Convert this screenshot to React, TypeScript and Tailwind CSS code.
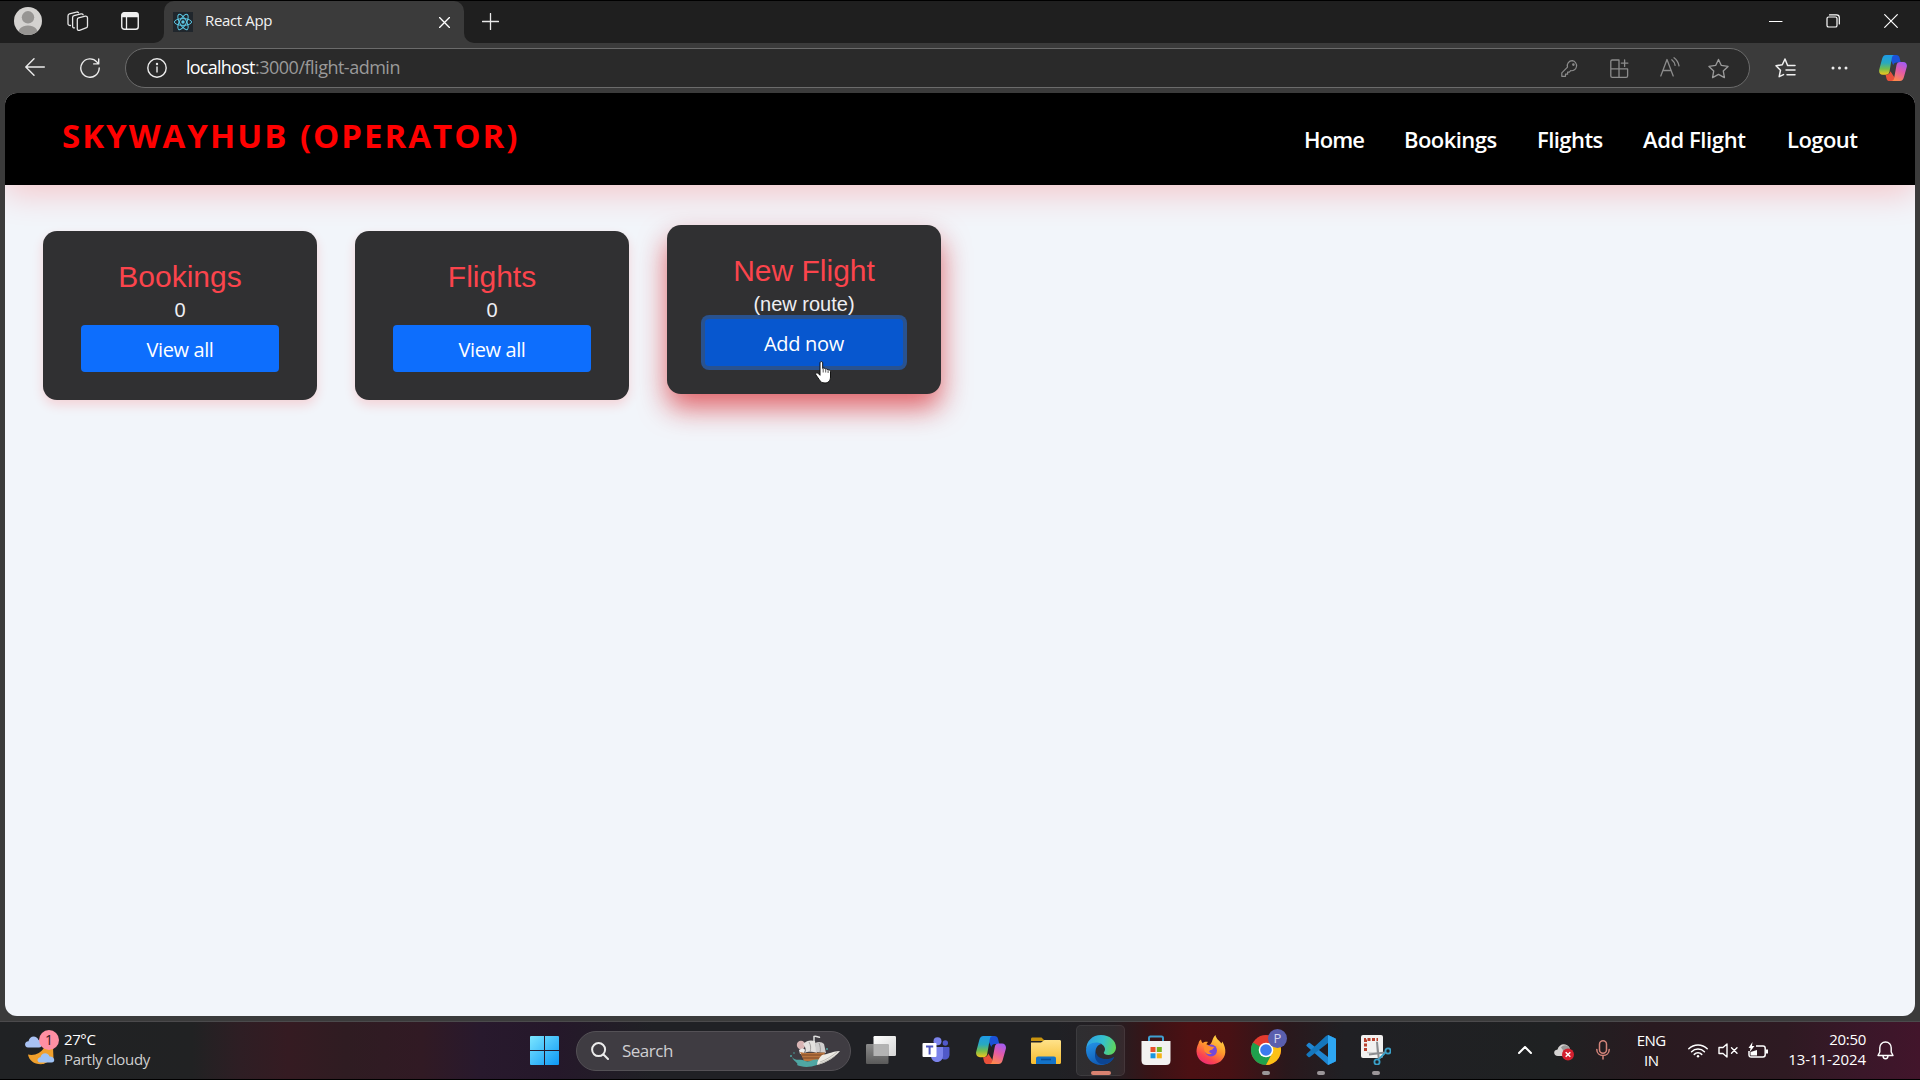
import React from "react";

type Box = { children?: React.ReactNode; className?: string };

const Icon = ({ vb, className, children }: Box & { vb: string }) => (
  <svg viewBox={vb} className={className} fill="none" strokeLinecap="round" strokeLinejoin="round">
    {children}
  </svg>
);

function CopilotLogo({ className, id }: { className: string; id: string }) {
  return (
    <svg viewBox="0 0 30 28" className={className}>
      <defs>
        <linearGradient id={id + "a"} x1="0" y1="0" x2="0" y2="1">
          <stop offset="0" stopColor="#1e9be8" />
          <stop offset=".4" stopColor="#28a9c0" />
          <stop offset=".7" stopColor="#74bd4d" />
          <stop offset="1" stopColor="#f2c51d" />
        </linearGradient>
        <linearGradient id={id + "b"} x1=".7" y1="0" x2=".3" y2="1">
          <stop offset="0" stopColor="#a45cf0" />
          <stop offset=".45" stopColor="#e25aa8" />
          <stop offset="1" stopColor="#ff8a4a" />
        </linearGradient>
      </defs>
      <path d="M15 0h3.500c2 0 3 .9 3.500 2.800L23.300 8H19c-2 0-3.200 1-3.700 3L12 4c-.5-2 1-4 3-4z" fill="#1b52d8" />
      <path d="M7.500 0H17c-2 0-2.800 1.200-3.200 3l-2.600 15c-.5 2.200-1.700 3.200-3.900 3.200H4c-3 0-4.500-2.500-3.800-5.500L3.300 4C4 1.500 5.200 0 7.500 0z" fill={`url(#${id}a)`} />
      <path d="M15 28h-3.500c-2 0-3-.9-3.500-2.800l-1-4h1c2.400 0 3.600-1.200 4.200-3.700L16.500 24c.5 2 .5 4-1.500 4z" fill="#e8503a" />
      <path d="M22.500 28H13c2 0 2.800-1.200 3.200-3l2.600-14.200c.5-2.200 1.700-3.300 3.900-3.300H26c3 0 4.500 2.500 3.800 5.500L26.700 24c-.7 2.500-1.900 4-4.200 4z" fill={`url(#${id}b)`} />
    </svg>
  );
}

function ReactFavicon() {
  return (
    <svg viewBox="0 0 20 20" className="h-5 w-5" fill="none" stroke="#5cc8e4" strokeWidth="1">
      <rect width="20" height="20" fill="#20262c" stroke="none" />
      <ellipse cx="10" cy="10" rx="8.600" ry="3.400" />
      <ellipse cx="10" cy="10" rx="8.600" ry="3.400" transform="rotate(60 10 10)" />
      <ellipse cx="10" cy="10" rx="8.600" ry="3.400" transform="rotate(120 10 10)" />
      <circle cx="10" cy="10" r="1.700" fill="#5cc8e4" stroke="none" />
    </svg>
  );
}

function TitleBar() {
  return (
    <div className="flex h-[43px] shrink-0 border-t border-black bg-[#1f1f1f]">
      <div className="flex w-[164px] shrink-0 items-start bg-[#3b3b3b]">
        <div className="flex h-[42px] w-full items-center rounded-br-[10px] bg-[#1f1f1f] pb-[2px] pl-[14px]">
          <svg viewBox="0 0 28 28" className="h-7 w-7">
            <defs><clipPath id="avatar"><circle cx="14" cy="14" r="14" /></clipPath></defs>
            <g clipPath="url(#avatar)">
              <rect width="28" height="28" fill="#d4d2d0" />
              <circle cx="14" cy="10.300" r="6.200" fill="#979593" />
              <path d="M4 28c0-6 3.500-9.500 10-9.500S24 22 24 28z" fill="#979593" />
            </g>
          </svg>
          <Icon vb="0 0 22 21" className="ml-[25px] h-[21px] w-[22px] stroke-[#e6e6e6] stroke-[1.3]">
            <path d="M11.500 6.800l6.800-1.600c1.200-.3 2.200.4 2.200 1.700v8c0 1-.5 1.700-1.500 2l-6.500 2.400c-1.200.4-2.200-.2-2.200-1.500V8.800c0-1.100.3-1.800 1.200-2z" />
            <path d="M7.500 16.800c-1.300.2-1.900-.5-1.900-1.600V6.600c0-1.100.4-1.800 1.400-2l7-1.700c1-.2 1.800.1 2.100.9" />
            <path d="M3.500 14.500C1.900 14.500 1 13.900 1 12.700V5c0-1.100.4-1.800 1.400-2.100l7-1.800c1-.3 1.700 0 2.100.7" />
          </Icon>
          <svg viewBox="0 0 18 18" className="ml-[32px] h-[18px] w-[18px]">
            <rect x=".75" y=".75" width="16.500" height="16.500" rx="2.500" fill="none" stroke="#f0f0f0" strokeWidth="1.400" />
            <path d="M.7 5.200V3A2.500 2.500 0 013.200.5h11.600A2.500 2.500 0 0117.300 3v2.200z" fill="#f0f0f0" />
            <path d="M5.500 5v12" stroke="#f0f0f0" strokeWidth="1.300" />
          </svg>
        </div>
      </div>
      <div className="flex w-[300px] shrink-0 items-center rounded-t-[10px] bg-[#3b3b3b] pl-[9px]">
        <ReactFavicon />
        <span className="ml-[12px] -mt-[4px] text-[15px] tracking-[-0.35px] text-[#f2f2f2]">React App</span>
        <Icon vb="0 0 10 10" className="ml-auto mr-[14px] h-[11px] w-[11px] stroke-white stroke-[1.2]">
          <path d="M.5.5l9 9M9.500.5l-9 9" />
        </Icon>
      </div>
      <div className="flex flex-1 bg-[#3b3b3b]">
        <div className="flex h-[42px] flex-1 items-center rounded-bl-[10px] bg-[#1f1f1f] pb-[2px] pl-[18px]">
          <Icon vb="0 0 17 17" className="h-[17px] w-[17px] stroke-[#e8e8e8] stroke-[1.3]">
            <path d="M8.500.5v16M.5 8.500h16" />
          </Icon>
          <Icon vb="0 0 14 14" className="ml-auto h-[14px] w-[14px] stroke-white stroke-[1.2]"><path d="M.5 7.500h12.500" /></Icon>
          <Icon vb="0 0 14 14" className="ml-[43px] h-[14px] w-[14px] stroke-white stroke-[1.2]">
            <rect x="1" y="3" width="10" height="10" rx="1.600" />
            <path d="M3.500.9h7c1.700 0 2.800 1 2.800 2.700v6.400" />
          </Icon>
          <Icon vb="0 0 14 14" className="ml-[44px] mr-[22px] h-[14px] w-[14px] stroke-white stroke-[1.2]">
            <path d="M.7.7l12.600 12.600M13.300.7L.7 13.300" />
          </Icon>
        </div>
      </div>
    </div>
  );
}

function Toolbar() {
  return (
    <div className="flex h-[50px] shrink-0 items-center bg-[#3b3b3b] pl-[25px]">
      <Icon vb="0 0 20 18" className="-mt-[2px] h-[18px] w-5 stroke-[#ececec] stroke-[1.4]">
        <path d="M19.300 9H1M9 .8L.8 9 9 17.200" />
      </Icon>
      <Icon vb="0 0 20 20" className="ml-[35px] h-5 w-5 stroke-[#ececec] stroke-[1.4]">
        <path d="M19.200 10A9.200 9.200 0 1117 4.100l1.500 1.700M18.700.9v5h-5" />
      </Icon>
      <div className="ml-[25px] flex h-10 w-[1625px] items-center rounded-full border border-[#6b6b6b] bg-[#2a2a2a] pl-[21px] pr-[20px]">
        <Icon vb="0 0 20 20" className="h-5 w-5 stroke-[#ececec] stroke-[1.4]">
          <circle cx="10" cy="10" r="9.200" />
          <path d="M10 9v5" />
          <circle cx="10" cy="6" r=".5" />
        </Icon>
        <span className="ml-[19px] -mt-[2px] w-[69px] text-[18px] tracking-[-0.75px] text-white">localhost</span>
        <span className="-mt-[2px] text-[18px] tracking-[-0.5px] text-[#9a9a9a]">:3000/flight-admin</span>
        <Icon vb="0 0 17 17" className="ml-auto h-[17px] w-[17px] stroke-[#8c8c8c] stroke-[1.2]">
          <path d="M11.300.7a5 5 0 00-4.800 6.400L.8 12.800v3.500h3.700v-2.100h2.100v-2.100h1.700l1.400-1.400A5 5 0 1011.300.7z" />
          <circle cx="12.400" cy="4.600" r=".7" />
        </Icon>
        <Icon vb="0 0 19 19" className="ml-[32px] h-[19px] w-[19px] stroke-[#8c8c8c] stroke-[1.3]">
          <path d="M9 18.300V1H2.200C1.400 1 .8 1.600.8 2.400v14.500c0 .8.600 1.400 1.400 1.400h14c.8 0 1.400-.6 1.400-1.400v-7H.8M14.600.8v6.600M11.300 4.100h6.600" />
        </Icon>
        <Icon vb="0 0 20 20" className="-mt-[2px] ml-[31px] h-[20px] w-[20px] stroke-[#8c8c8c] stroke-[1.3]">
          <path d="M.8 19L7 2.500 13.200 19M3 13.500h8M11.800 2.800c1.800 1.400 2.900 3.200 3.300 5.500M14 .8c2.600 2 4.400 4.600 5 8" />
        </Icon>
        <Icon vb="0 0 22 21" className="ml-[28px] h-[21px] w-[21px] stroke-[#9a9a9a] stroke-[1.4]">
          <path d="M11 1l3 6.300 7 1-5 4.800 1.200 6.900L11 16.700 4.800 20 6 13.100 1 8.300l7-1z" />
        </Icon>
      </div>
      <Icon vb="0 0 21 20" className="ml-[25px] h-5 w-[21px] stroke-[#f0f0f0] stroke-[1.5]">
        <path d="M12.500 7.300L10 1 7.300 6.800 1 7.700l4.500 4.500L4.200 18.700l4.300-2.100M12.500 7.500h7.500M11 12h9M12 16.700h8" />
      </Icon>
      <svg viewBox="0 0 17 4" className="ml-[35px] h-1 w-[17px] fill-[#ececec]">
        <circle cx="2" cy="2" r="1.500" /><circle cx="8.500" cy="2" r="1.500" /><circle cx="15" cy="2" r="1.500" />
      </svg>
      <CopilotLogo id="cpt" className="ml-[31px] h-[26px] w-[28px]" />
    </div>
  );
}

function Navbar() {
  return (
    <header className="flex h-[92px] items-center bg-black pl-[57px] shadow-[0_8px_34px_rgba(255,0,0,0.2)]">
      <h1 className="-mt-[6px] whitespace-nowrap text-[33px] font-bold tracking-[2px] text-[#ff0000] [word-spacing:1px]">SKYWAYHUB (OPERATOR)</h1>
      <nav className="ml-auto mr-[57px] flex whitespace-nowrap pt-[1px] text-[22px] font-semibold tracking-[-0.55px] text-white">
        <a className="w-[100px] tracking-[-0.9px]">Home</a>
        <a className="w-[133px]">Bookings</a>
        <a className="w-[106px]">Flights</a>
        <a className="w-[144px] tracking-[-0.4px]">Add Flight</a>
        <a className="w-[71px]">Logout</a>
      </nav>
    </header>
  );
}

function Card({ title, sub, action, hover }: { title: string; sub: string; action: string; hover?: boolean }) {
  return (
    <section
      className={
        "flex h-[169px] w-[274px] flex-col items-center rounded-[14px] bg-[#303032] pt-[27px] font-['Liberation_Sans',sans-serif] " +
        (hover ? "-mt-[6px] shadow-[0_14px_28px_rgba(215,22,28,0.65)]" : "shadow-[0_5px_12px_rgba(255,0,0,0.14)]")
      }
    >
      <h2 className="text-[30px] leading-[38px] text-[#fb444c]">{title}</h2>
      <p className="text-[20px] leading-[29px] text-[#eeeef2]">{sub}</p>
      <button
        className={
          "h-[47px] w-[198px] shrink-0 rounded-[4px] pt-[2px] font-['Open_Sans',sans-serif] text-[20px] leading-[45px] text-white " +
          (hover ? "bg-[#0757cf] tracking-[-0.3px] shadow-[0_0_0_4px_#29528f]" : "bg-[#0d6efd] tracking-[-0.4px]")
        }
      >
        {action}
      </button>
    </section>
  );
}

function Pointer() {
  return (
    <svg viewBox="0 0 18 23" className="absolute left-[815px] top-[361px] h-[23px] w-[18px]">
      <path d="M5 1.800c0-1.600 2.700-1.600 2.700 0v5.700c.9-.7 2.400-.4 2.600.6.900-.5 2.300-.2 2.500.9 1.200-.5 2.700.1 2.700 1.500v5.500c0 3.500-2.200 6-5.500 6-3.200 0-4.700-1.300-5.900-3.600L.8 13.800c-.8-1.700 1.200-2.700 2.400-1.400L5 14.300z" fill="#fff" stroke="#111" strokeWidth="1" />
      <path d="M8.200 8v3.500M10.700 8.500v3M13.100 9.500v2.500" stroke="#333" strokeWidth=".8" />
    </svg>
  );
}

const StartLogo = () => (
  <svg viewBox="0 0 29 29" className="ml-[380px] h-[29px] w-[29px]">
    <defs><linearGradient id="win" x1="0" y1="0" x2="1" y2="1"><stop stopColor="#7be6ff" /><stop offset="1" stopColor="#0d98f5" /></linearGradient></defs>
    <path fill="url(#win)" d="M1 0h13v14H0V1a1 1 0 011-1zM15 0h13a1 1 0 011 1v13H15zM0 15h14v14H1a1 1 0 01-1-1zM15 15h14v13a1 1 0 01-1 1H15z" />
  </svg>
);

const Ship = () => (
  <svg viewBox="0 0 51 32" className="ml-auto mr-[10px] h-[32px] w-[51px]">
    <circle cx="12" cy="10" r="4.200" fill="#d8b4b4" />
    <path d="M25 6V1.500c3-1 4 1.500 6 .5" stroke="#ddd" strokeWidth="1.500" fill="none" />
    <path d="M14 9c4-4 8-4 12-3l2 12c-4-1-9-2-12 0 1-3 1-6-2-9z" fill="#e3e1df" />
    <path d="M26 8c4-2 7-1 9 1l2 9-10-1z" fill="#cfcece" />
    <path d="M20 7c2 3 2 7 1 10M30 8c1 3 2 6 1 9" stroke="#8f8d8c" strokeWidth=".8" fill="none" />
    <path d="M10 15c3-2 5-2 6 0l-1 4h-4z" fill="#eee" />
    <path d="M11 17l5 1 20-.5c-1 5-4 9-8 9.500l-13-1z" fill="#b9753f" />
    <path d="M13 20l21 0M14 23l17 0" stroke="#7b4826" strokeWidth="1" />
    <path d="M3 22c4 5 8 1 13 4 5 2 8-3 14-1l-2 5c-8 3-16 2-20 0 2-2-3-3-5-8z" fill="#4fa6a3" />
    <path d="M33 20c7-1 11-4 18-4-4 5-13 12-23 14 0-4 2-7 5-10z" fill="#eceae4" />
    <path d="M31 27c6-2 12-6 17-10M30 29c6-2 12-5 16-8" stroke="#a9a7a2" strokeWidth=".7" fill="none" />
    <circle cx="2" cy="21" r="1" fill="#4fa6a3" /><circle cx="5" cy="18" r=".8" fill="#4fa6a3" /><circle cx="38" cy="14" r="1" fill="#4fa6a3" />
  </svg>
);

function Slot({ children, dot, active, badge }: Box & { dot?: boolean; active?: boolean; badge?: string }) {
  return (
    <div className={"relative mx-[3px] flex h-[51px] w-[49px] flex-col items-center rounded-[5px] " + (active ? "border border-[#ffffff12] bg-[#ffffff10] pt-[9px]" : "pt-[10px]")}>
      {children}
      {dot && <span className="absolute bottom-[1px] h-1 w-2 rounded-full bg-[#9b9699]" />}
      {active && <span className="absolute bottom-0 h-1 w-5 rounded-full bg-[#d98271]" />}
      {badge && (
        <span className="absolute right-[3px] top-[4px] h-[19px] w-[19px] rounded-full bg-[#5a5fae] text-center text-[13px] leading-[19px] text-[#d5d6ee]">{badge}</span>
      )}
    </div>
  );
}

const ico = "h-[30px] w-[30px]";

function TaskbarApps() {
  return (
    <div className="ml-[2px] flex">
      <Slot>
        <svg viewBox="0 0 30 30" className={ico}>
          <defs>
            <linearGradient id="tv" x1="0" y1="0" x2="1" y2="1"><stop stopColor="#fff" /><stop offset="1" stopColor="#d5d5d5" /></linearGradient>
            <linearGradient id="tw" x1="0" y1="0" x2="0" y2="1"><stop stopColor="#8b8b8b" /><stop offset="1" stopColor="#5a5a5a" /></linearGradient>
          </defs>
          <rect x="7.500" y="1" width="22.500" height="20" rx="1.200" fill="url(#tv)" />
          <rect x="0" y="9" width="22.500" height="20" rx="1.200" fill="url(#tw)" />
          <rect x="7.500" y="9" width="15" height="12" fill="#b3b3b3" />
        </svg>
      </Slot>
      <Slot>
        <svg viewBox="1 0 30 30" className={ico}>
          <circle cx="17.500" cy="6.200" r="4" fill="#7b83eb" />
          <circle cx="25.300" cy="8" r="2.700" fill="#5059c9" />
          <path d="M20 12h8.500c.5 0 1 .5 1 1v6.500c0 3-2 5-4.700 5-1.500 0-3-.6-4.800-2z" fill="#5059c9" />
          <path d="M11 12h12v8.500c0 4-2.600 6.500-6 6.500s-6-2.500-6-6.500z" fill="#7b83eb" />
          <rect x="2.500" y="8" width="14" height="14" rx="1" fill="#fff" />
          <path d="M6 11.500h7.200M9.600 11.500v8" stroke="#4b53bc" strokeWidth="2" />
        </svg>
      </Slot>
      <Slot><CopilotLogo id="cpb" className={ico} /></Slot>
      <Slot>
        <svg viewBox="0 0 30 30" className={ico}>
          <defs><linearGradient id="fo" x1="0" y1="0" x2="0" y2="1"><stop stopColor="#ffe28a" /><stop offset="1" stopColor="#f6bc2f" /></linearGradient></defs>
          <path d="M0 4c0-1 .6-1.500 1.500-1.500h9L14 6H0z" fill="#c9940f" />
          <path d="M0 7.500h10l3.500-2.500H28.500c1 0 1.500.6 1.500 1.500v21c0 .9-.6 1.500-1.500 1.500h-27C.6 29 0 28.400 0 27.500z" fill="url(#fo)" />
          <path d="M5 29v-5.500c0-1.300.8-2 2-2h16c1.200 0 2 .7 2 2V29z" fill="#1373c9" />
          <path d="M10 24.500h10" stroke="#0b4f96" strokeWidth="1.600" />
        </svg>
      </Slot>
      <Slot active>
        <svg viewBox="0 0 30 30" className={ico}>
          <defs>
            <linearGradient id="e1" x1="0" y1=".3" x2="1" y2=".5"><stop stopColor="#2d9fe6" /><stop offset=".55" stopColor="#35c1cc" /><stop offset="1" stopColor="#5fd65c" /></linearGradient>
            <linearGradient id="e2" x1="0" y1="0" x2=".5" y2="1"><stop stopColor="#2494e8" /><stop offset="1" stopColor="#1059b3" /></linearGradient>
          </defs>
          <path d="M15 0c8.500 0 15 5.500 15 12.500 0 4.500-3.500 7.500-7.500 7.500-3 0-4.700-1-4.700-2.200 0-1 1.200-1.400 1.200-3.600C19 11 15.500 8 11 8 5.500 8 1 11 .2 15 0 6 6.500 0 15 0z" fill="url(#e1)" />
          <path d="M0 15c.5-4.500 5-7.500 10-7.500 2.500 0 4.500.6 6 1.600-4 .3-6.500 4-6.500 8C9.500 23 14 26 19.500 26c3.500 0 6-1 7.500-2-2.500 3.800-7 6-12 6C6.500 30 0 23.500 0 15z" fill="url(#e2)" />
          <path d="M9.600 16c.8 6 5.400 8 10.400 8 3 0 5.500-.8 7.200-1.800.7-.3 1 .3.500 1C25 27.500 20 29.500 16 29.300c-5-1-8.500-6-6.400-13.300z" fill="#0c4593" />
        </svg>
      </Slot>
      <Slot>
        <svg viewBox="0 0 30 30" className={ico}>
          <path d="M8 7V3.200C8 2 8.600 1.500 9.500 1.500h11c1 0 1.500.6 1.500 1.700V7" fill="none" stroke="#3f9fd0" strokeWidth="2" />
          <path d="M.5 6h29v19.500c0 3-1.500 4.500-4.500 4.500H5c-3 0-4.500-1.500-4.500-4.500z" fill="#f3f2f1" />
          <rect x="9.500" y="12" width="5" height="5" fill="#e8502a" /><rect x="15.800" y="12" width="5" height="5" fill="#78b41f" />
          <rect x="9.500" y="18.300" width="5" height="5" fill="#1796e0" /><rect x="15.800" y="18.300" width="5" height="5" fill="#f5b316" />
        </svg>
      </Slot>
      <Slot>
        <svg viewBox="0 0 30 30" className={ico}>
          <defs><linearGradient id="fx" x1=".85" y1="0" x2=".3" y2="1"><stop stopColor="#ffe14a" /><stop offset=".45" stopColor="#ff9a2b" /><stop offset=".8" stopColor="#fb4550" /><stop offset="1" stopColor="#ec2a76" /></linearGradient></defs>
          <path d="M5 4.500c.2 1.600.8 2.800 1.800 3.500C8 7 10 6.600 12 7c-1 .8-1.500 1.700-1.500 2.500l3 .8C17 7 16 3 19.500 0c.5 4 4 5.500 6 8.500l.8-2c2.500 4 3.200 7.500 3 11C28.700 24.500 22.500 29.500 15 29.500 7 29.500.8 24 .5 16.500c0-3 .8-6 2-8C2.700 6.500 3.800 5.300 5 4.500z" fill="url(#fx)" />
          <circle cx="15" cy="15.500" r="6" fill="#7548d8" />
          <path d="M8 12c2-2 5-2 6.500-.5L19 12c-2 .5-1.500 2.500-4 3-3 .5-1.500 3.500 1 3-3.500 3-8.500 0-8-6z" fill="#ff8a2c" />
        </svg>
      </Slot>
      <Slot dot badge="P">
        <svg viewBox="0 0 30 30" className={ico}>
          <circle cx="15" cy="15" r="15" fill="#e33b2e" />
          <path d="M15 15L2 7.500A15 15 0 0015 30l6.500-11.300z" fill="#1fa04c" />
          <path d="M15 8h13.300A15 15 0 0115 30l6-11.500z" fill="#fbc116" />
          <circle cx="15" cy="15" r="7.300" fill="#fff" /><circle cx="15" cy="15" r="5.800" fill="#3b7bee" />
        </svg>
      </Slot>
      <Slot dot>
        <svg viewBox="0 0 30 30" className={ico}>
          <path d="M22 0l7 3.300c.7.300 1 .8 1 1.500v20.400c0 .7-.3 1.200-1 1.500L22 30 .8 11.200c-.6-.5-.6-1.200 0-1.700l1.600-1.400c.5-.4 1-.4 1.500 0L22 22z" fill="#1f86d2" />
          <path d="M22 0v8L3.900 21.900c-.5.400-1 .4-1.500 0L.8 20.500c-.6-.5-.6-1.200 0-1.700L20 1z" fill="#1577bd" />
          <path d="M22 0l7 3.300c.7.300 1 .8 1 1.500v20.400c0 .7-.3 1.200-1 1.500L22 30z" fill="#2ea6f2" />
        </svg>
      </Slot>
      <Slot dot>
        <svg viewBox="0 0 30 30" className={ico}>
          <rect x="0" y="0" width="22" height="23" rx="2" fill="#f2f1f0" />
          <path d="M4.500 16V4.500H17" fill="none" stroke="#b8402c" strokeWidth="3" strokeDasharray="3 1.500" />
          <path d="M16 6v12l-10-.5" fill="none" stroke="#cfcfcf" strokeWidth="1.500" />
          <path d="M16 7l1.800 17M8 19.500l16-2" stroke="#8b8d90" strokeWidth="2" />
          <circle cx="27" cy="16" r="2.600" fill="none" stroke="#3aa0c8" strokeWidth="1.800" />
          <circle cx="16" cy="27" r="2.600" fill="none" stroke="#3aa0c8" strokeWidth="1.800" />
          <path d="M18 24l6-6" stroke="#3aa0c8" strokeWidth="1.800" />
        </svg>
      </Slot>
    </div>
  );
}

function Weather() {
  return (
    <div className="flex w-[150px] items-center whitespace-nowrap pb-[5px] pl-[25px]">
      <div className="relative h-[36px] w-[34px]">
        <svg viewBox="0 0 34 36" className="h-[36px] w-[34px]">
          <path d="M3 24.500c6 1.500 13-1 16.500-7.500H28l.5 12-10 5C10 35 4 31 3 24.500z" fill="#f0a02c" />
          <path d="M3 17.500c-4-.5-4-6 .5-6.300C4.500 5 12 5 13.500 10c4 0 5 7.500.5 7.500z" fill="#a9c2f3" />
          <path d="M15 32.500c-3.500-.5-3.200-5 .5-5.300 1-5 7.500-5.500 9-.7 4.500-.5 7 5.500 2 6z" fill="#9fc3f5" />
        </svg>
        <span className="absolute left-[14px] top-0 h-5 w-5 rounded-full bg-[#ff8fa3] text-center text-[14px] leading-5 text-[#33151b]">1</span>
      </div>
      <div className="ml-[5px] mt-[1px] text-[15px] leading-[20px]">
        <div className="tracking-[-0.4px] text-white">27°C</div>
        <div className="tracking-[-0.3px] text-[#cfcfcf]">Partly cloudy</div>
      </div>
    </div>
  );
}

function Tray() {
  return (
    <div className="ml-auto flex items-center pb-[1px] text-[15px] leading-[20px] text-white">
      <Icon vb="0 0 14 8" className="h-2 w-[14px] stroke-white stroke-2"><path d="M1 7l6-6 6 6" /></Icon>
      <svg viewBox="0 0 20 18" className="ml-[22px] mt-[3px] h-[18px] w-5">
        <path d="M4 13c-5-.5-5-6-.5-6.500C5 1 11.500-1 15.500 4.500V13z" fill="#d5d3d2" />
        <path d="M7 4.500c2.500-3.500 7-3 9 1.500l-4 5z" fill="#9b9998" />
        <circle cx="14" cy="11.500" r="6" fill="#d3202f" />
        <path d="M11.700 9.200l4.600 4.600M16.300 9.200l-4.600 4.600" stroke="#fff" strokeWidth="1.500" />
      </svg>
      <Icon vb="0 0 14 20" className="ml-[22px] h-5 w-[14px] stroke-[#d3847a] stroke-[1.5]">
        <rect x="3.500" y=".8" width="7" height="12.500" rx="3.500" />
        <path d="M.8 9.500c0 8 12.400 8 12.400 0M7 15.700V19" />
      </Icon>
      <div className="-mt-[1px] ml-[24px] w-[34px] text-center tracking-[-0.5px]"><div>ENG</div><div>IN</div></div>
      <Icon vb="0 0 20 15" className="ml-[20px] h-[15px] w-5 stroke-white stroke-[1.5]">
        <path d="M.8 5.800a13 13 0 0118.400 0M3.600 8.700a9 9 0 0112.800 0M6.300 11.400a5.200 5.200 0 017.400 0" />
        <circle cx="10" cy="13.200" r="1.200" fill="#fff" stroke="none" />
      </Icon>
      <Icon vb="0 0 20 15" className="ml-[10px] h-[15px] w-5 stroke-white stroke-[1.4]">
        <path d="M9 1v13l-4-3.500H1v-6h4zM13.500 4.800l5.500 5.500M19 4.800l-5.500 5.500" />
      </Icon>
      <svg viewBox="0 0 20 17" className="ml-[10px] h-[17px] w-5">
        <path d="M8 4h7c1.400 0 2.200.8 2.200 2.200v6.600c0 1.400-.8 2.200-2.200 2.200H3.200C1.800 15 1 14.200 1 12.800V9" fill="none" stroke="#fff" strokeWidth="1.500" />
        <path d="M18 7.500h2v4h-2zM2.500 10L9 8v5.500H2.500z" fill="#fff" />
        <path d="M4.500 0L.5 6h2L1.800 10 6.500 4H4z" fill="#fff" />
      </svg>
      <div className="-mt-[2px] ml-[20px] text-right"><div className="tracking-[-0.3px]">20:50</div><div className="tracking-[-0.05px]">13-11-2024</div></div>
      <Icon vb="0 0 17 19" className="ml-[11px] mr-[26px] h-[19px] w-[17px] stroke-white stroke-[1.4]">
        <path d="M8.500 1C5 1 2.800 3.500 2.800 6.800V11L1 14.500h15L14.200 11V6.800C14.200 3.500 12 1 8.500 1zM6 14.800c0 4 5 4 5 0" />
      </Icon>
    </div>
  );
}

function Taskbar() {
  return (
    <footer className="flex h-[59px] shrink-0 items-center border-b border-t border-b-black border-t-[#4b4a4c] bg-[linear-gradient(90deg,#202224_0%,#212223_10%,#2e1e24_12.5%,#351b22_15%,#2f1c22_18%,#311a24_22%,#28192d_25%,#25182a_29%,#202125_34%,#202125_55%,#241e22_58%,#3a1316_60%,#4c1013_62%,#481114_64%,#2a181c_67%,#202024_70%,#1f2122_81%,#291a20_86%,#2e1a22_93%,#3a1729_97%,#42152b_100%)]">
      <Weather />
      <StartLogo />
      <div className="ml-[17px] flex h-10 w-[275px] items-center rounded-full border border-[#545156] bg-[#3f3c42] pl-[14px]">
        <Icon vb="0 0 18 18" className="h-[18px] w-[18px] stroke-[#ececec] stroke-2">
          <circle cx="7.600" cy="7.600" r="6.500" /><path d="M12.500 12.500l4.500 4.500" />
        </Icon>
        <span className="ml-[13px] text-[17px] tracking-[-0.5px] text-[#d0cfd2]">Search</span>
        <Ship />
      </div>
      <TaskbarApps />
      <Tray />
    </footer>
  );
}

export default function App() {
  return (
    <div className="relative flex h-[1080px] w-[1920px] flex-col overflow-hidden bg-[#3b3b3b] font-['Open_Sans',sans-serif]">
      <TitleBar />
      <Toolbar />
      <main className="mx-[5px] mb-[5px] flex-1 overflow-hidden rounded-[12px] bg-[#f2f5fa]">
        <Navbar />
        <div className="flex items-start gap-[38px] pl-[38px] pt-[46px]">
          <Card title="Bookings" sub="0" action="View all" />
          <Card title="Flights" sub="0" action="View all" />
          <Card title="New Flight" sub="(new route)" action="Add now" hover />
        </div>
      </main>
      <Taskbar />
      <Pointer />
    </div>
  );
}
